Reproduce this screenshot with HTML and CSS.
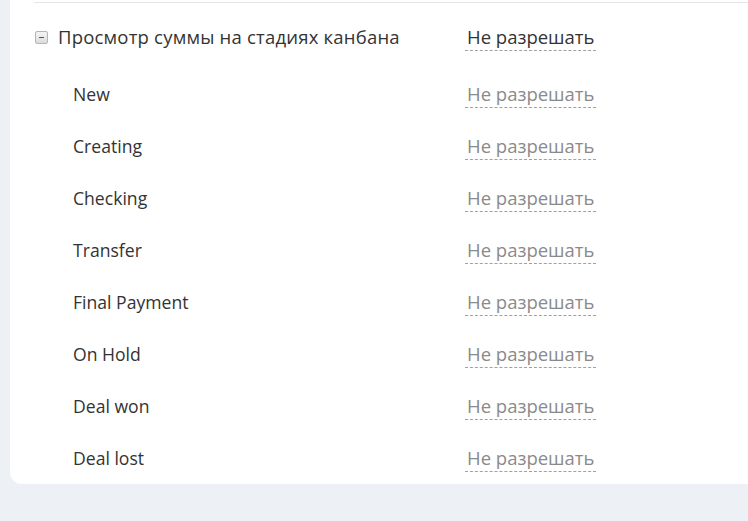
FILE: index.html
```html
<!DOCTYPE html>
<html lang="ru">
<head>
<meta charset="utf-8">
<link rel="stylesheet" href="styles.css">
</head>
<body>
<div class="card">
  <div class="section">
    <div class="row head">
      <div class="name"><span class="toggle"></span>Просмотр суммы на стадиях канбана</div>
      <div class="value"><span class="link dark">Не разрешать</span></div>
    </div>
    <div class="row sub"><div class="name">New</div><div class="value"><span class="link">Не разрешать</span></div></div>
    <div class="row sub"><div class="name">Creating</div><div class="value"><span class="link">Не разрешать</span></div></div>
    <div class="row sub"><div class="name">Checking</div><div class="value"><span class="link">Не разрешать</span></div></div>
    <div class="row sub"><div class="name">Transfer</div><div class="value"><span class="link">Не разрешать</span></div></div>
    <div class="row sub"><div class="name">Final Payment</div><div class="value"><span class="link">Не разрешать</span></div></div>
    <div class="row sub"><div class="name">On Hold</div><div class="value"><span class="link">Не разрешать</span></div></div>
    <div class="row sub"><div class="name">Deal won</div><div class="value"><span class="link">Не разрешать</span></div></div>
    <div class="row sub"><div class="name">Deal lost</div><div class="value"><span class="link">Не разрешать</span></div></div>
  </div>
</div>
</body>
</html>
```
FILE: styles.css
```css
html, body {
  margin: 0;
  padding: 0;
  background: #edf1f5;
  font-family: "Open Sans", "Noto Sans", sans-serif;
  color: #333;
  overflow: hidden;
}
.card {
  margin-left: 10px;
  width: 760px;
  height: 484px;
  background: #fff;
  border-radius: 0 0 0 12px;
  padding-top: 2px;
  box-sizing: border-box;
}
.section {
  margin-left: 24px;
  border-top: 1px solid #e6e6e6;
}
.row {
  display: grid;
  grid-template-columns: 431px 1fr;
  align-items: center;
  height: 52px;
  font-size: 18.5px;
  line-height: 24px;
}
.row.head {
  height: 65px;
  padding-top: 3px;
  box-sizing: border-box;
}
.row.head .name {
  letter-spacing: 0.2px;
}
.row.sub .name {
  padding-left: 39px;
  font-size: 17.6px;
}
.name {
  display: flex;
  align-items: center;
  white-space: nowrap;
}
.toggle {
  width: 11px;
  height: 11px;
  border: 1px solid #b5b5b5;
  border-radius: 2px;
  background: linear-gradient(#f4f4f4, #dcdcdc);
  margin-left: 1px;
  margin-right: 10px;
  position: relative;
  flex: none;
}
.toggle::after {
  content: "";
  position: absolute;
  left: 3px;
  top: 5px;
  width: 5px;
  height: 1px;
  background: #555;
}
.link {
  color: #8a8a8a;
  padding: 0 2px 1px;
  border-bottom: 1px dashed #a0a0a0;
}
.link.dark {
  color: #333;
}
```
